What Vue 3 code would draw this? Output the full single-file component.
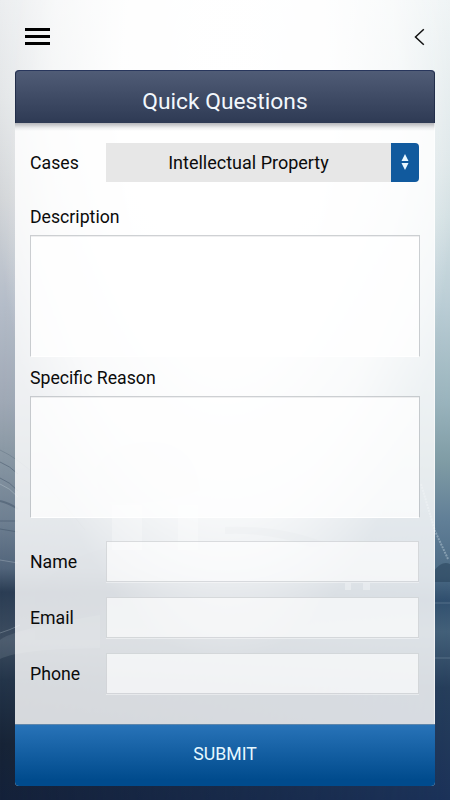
<script setup>
    import { ref } from 'vue';

    const description = ref('');
    const reason = ref('');
    const contact = ref({ name: '', email: '', phone: '' });
    const fields = [
        { key: 'name', label: 'Name', type: 'text' },
        { key: 'email', label: 'Email', type: 'email' },
        { key: 'phone', label: 'Phone', type: 'tel' }
    ];
</script>

<template>
    <div class="page">
        <svg class="backdrop" viewBox="0 0 450 800" preserveAspectRatio="none" aria-hidden="true">
            <defs>
                <linearGradient id="left" x1="0" y1="0" x2="0" y2="1">
                    <stop offset="0" stop-color="#ebedef" />
                    <stop offset=".12" stop-color="#e1e4e6" />
                    <stop offset=".25" stop-color="#d0d3d6" />
                    <stop offset=".38" stop-color="#b5bdc9" />
                    <stop offset=".5" stop-color="#a0a9b6" />
                    <stop offset=".56" stop-color="#8c9aa6" />
                    <stop offset=".65" stop-color="#6f8092" />
                    <stop offset=".71" stop-color="#52657b" />
                    <stop offset=".74" stop-color="#2b3d54" />
                    <stop offset=".8" stop-color="#3d4d60" />
                    <stop offset=".85" stop-color="#24354a" />
                    <stop offset=".93" stop-color="#172437" />
                    <stop offset="1" stop-color="#14213a" />
                </linearGradient>
                <linearGradient id="right" x1="0" y1="0" x2="0" y2="1">
                    <stop offset="0" stop-color="#eff4f5" />
                    <stop offset=".2" stop-color="#dee7e9" />
                    <stop offset=".27" stop-color="#d3e0e3" />
                    <stop offset=".38" stop-color="#bacdd5" />
                    <stop offset=".5" stop-color="#9ab4bd" />
                    <stop offset=".58" stop-color="#7e9ba4" />
                    <stop offset=".65" stop-color="#617f97" />
                    <stop offset=".72" stop-color="#4b6a84" />
                    <stop offset=".75" stop-color="#31506f" />
                    <stop offset=".79" stop-color="#436079" />
                    <stop offset=".86" stop-color="#263e5b" />
                    <stop offset="1" stop-color="#1b3259" />
                </linearGradient>
                <linearGradient id="across" x1="0" y1="0" x2="1" y2="0">
                    <stop offset="0" stop-color="#000" />
                    <stop offset="1" stop-color="#fff" />
                </linearGradient>
                <mask id="fade"><rect width="450" height="800" fill="url(#across)" /></mask>
                <radialGradient id="glow" gradientUnits="userSpaceOnUse" cx="0" cy="0" r="1" gradientTransform="translate(225 110) scale(232 550)">
                    <stop offset="0" stop-color="#fff" />
                    <stop offset=".45" stop-color="#fff" stop-opacity=".95" />
                    <stop offset=".75" stop-color="#fff" stop-opacity=".65" />
                    <stop offset="1" stop-color="#fff" stop-opacity="0" />
                </radialGradient>
            </defs>
            <rect width="450" height="800" fill="url(#left)" />
            <rect width="450" height="800" fill="url(#right)" mask="url(#fade)" />
            <rect width="450" height="800" fill="url(#glow)" />
            <!-- pages of the open book -->
            <g fill="none" stroke="#34475c" stroke-opacity=".4">
                <path d="M0 450Q35 466 85 530" stroke-opacity=".2" />
                <path d="M0 462Q10 466 18 474" />
                <path d="M0 478Q10 482 18 491" />
                <path d="M0 484Q10 488 18 497" stroke="#c1ccd4" />
                <path d="M0 501Q9 503 18 509" stroke-width="2" />
                <path d="M0 521H18M0 529L18 532" />
                <path d="M0 560L18 563" stroke="#aebcc6" />
            </g>
            <path d="M0 640Q10 630 100 615V648Q20 649 0 659Z" fill="#8796a3" fill-opacity=".22" />
            <path d="M0 633Q10 630 20 625" stroke="#8d9ba7" stroke-opacity=".5" fill="none" />
            <!-- gavel -->
            <path d="M95 470Q110 440 155 442Q195 443 200 490Q150 510 100 500Z" fill="#7c8795" fill-opacity=".12" />
            <path d="M112 505H142V550H112ZM178 505H198V550H178Z" fill="#fff" fill-opacity=".25" />
            <path d="M225 527Q285 525 330 545L310 547Q270 532 225 534Z" fill="#3d5165" fill-opacity=".15" />
            <path d="M35 590Q70 555 107 548V640H35Z" fill="#26384a" fill-opacity=".08" />
            <!-- scales -->
            <path d="M421 484L435 531L448 559" fill="none" stroke="#a9bdca" stroke-opacity=".6" stroke-width="2" stroke-dasharray="2 1" />
            <path d="M434 571Q442 560 450 564V582H434Z" fill="#243d56" fill-opacity=".5" />
            <path d="M345 583H351V590H345ZM363 583H370V590H363Z" fill="#fff" fill-opacity=".3" />
            <path d="M435 603H450M435 658H450" stroke="#8199aa" stroke-opacity=".45" />
        </svg>

        <header class="topbar">
            <button class="icon" aria-label="Menu">
                <svg width="25" height="18" viewBox="0 0 25 18"><path d="M0 1.5H25M0 8.5H25M0 15.5H25" stroke="#000" stroke-width="2.8" /></svg>
            </button>
            <button class="icon" aria-label="Back">
                <svg width="11" height="18" viewBox="0 0 11 18"><path d="M9.8 1.2L1.5 9L9.8 16.8" fill="none" stroke="#111" stroke-width="1.5" /></svg>
            </button>
        </header>

        <form class="card" @submit.prevent>
            <h1>Quick Questions</h1>
            <div class="body">
                <div class="row cases">
                    <span class="label">Cases</span>
                    <div class="select">
                        <span class="value">Intellectual Property</span>
                        <span class="arrows">
                            <svg width="8" height="16" viewBox="0 0 8 16"><path d="M4 0L7.5 7H.5ZM.5 9H7.5L4 16Z" fill="#e9f7ff" /></svg>
                        </span>
                    </div>
                </div>
                <label class="block first">
                    <span>Description</span>
                    <textarea v-model="description"></textarea>
                </label>
                <label class="block">
                    <span>Specific Reason</span>
                    <textarea v-model="reason"></textarea>
                </label>
                <div class="contact">
                    <label class="row" v-for="field in fields" :key="field.key">
                        <span class="label">{{ field.label }}</span>
                        <input :type="field.type" v-model="contact[field.key]">
                    </label>
                </div>
            </div>
            <button class="submit">SUBMIT</button>
        </form>
    </div>
</template>

<style>
    body{
        margin: 0;
    }
</style>

<style scoped>
    *{
        box-sizing: border-box;
    }
    .page{
        position: relative;
        z-index: 0;
        width: 450px;
        height: 800px;
        overflow: hidden;
        font-family: Roboto, "Liberation Sans", sans-serif;
        font-size: 17.7px;
        color: #0b0b0b;
    }
    .backdrop{
        position: absolute;
        inset: 0;
        width: 100%;
        height: 100%;
        z-index: -1;
    }
    .topbar{
        display: flex;
        justify-content: space-between;
        align-items: center;
        height: 70px;
        padding: 4px 25px 0;
    }
    .icon{
        display: flex;
        padding: 0;
        border: none;
        background: none;
    }
    .card{
        width: 420px;
        margin: 0 auto;
    }
    h1{
        height: 53px;
        margin: 0;
        padding-top: 9px;
        border-top: 1px solid #28365c;
        border-radius: 4px 4px 0 0;
        background-image: linear-gradient(#505c76, #2e3a54);
        box-shadow: inset 1px 0 #222e4a, inset -1px 0 #222e4a;
        color: #f3f8fd;
        font-size: 22.8px;
        font-weight: 400;
        line-height: 44px;
        text-align: center;
    }
    .body{
        height: 601px;
        padding: 19px 15px 0;
        border-right: 1px solid rgba(255, 255, 255, 0.5);
        background-image: linear-gradient(#b5b6ba, rgba(235, 236, 238, 0.8) 5px, rgba(255, 255, 255, 0.82) 8px);
    }
    .row{
        display: flex;
        align-items: center;
    }
    .cases{
        height: 40px;
    }
    .label{
        width: 76px;
    }
    .cases .label{
        line-height: 40px;
        padding-top: 1px;
    }
    .select{
        display: flex;
        flex: 1;
        height: 39px;
    }
    .value{
        flex: 1;
        background-color: #e7e7e7;
        font-size: 18px;
        line-height: 40px;
        text-align: center;
    }
    .arrows{
        display: flex;
        align-items: center;
        justify-content: center;
        width: 28px;
        border-radius: 0 4px 4px 0;
        background-color: #115a9e;
    }
    .block{
        display: block;
        height: 161px;
    }
    .block.first{
        margin-top: 15px;
    }
    .block span{
        display: block;
        height: 38px;
        line-height: 40px;
    }
    textarea, input{
        display: block;
        margin: 0;
        outline: none;
        resize: none;
        border: 1px solid rgba(160, 165, 170, 0.5);
        background-color: rgba(255, 255, 255, 0.65);
        border-radius: 0;
        font: inherit;
    }
    textarea{
        width: 390px;
        height: 122px;
        border-bottom-color: #fff;
        background-color: rgba(255, 255, 255, 0.75);
        background-clip: padding-box;
        box-shadow: inset 0 1px rgba(190, 192, 194, 0.25);
    }
    .contact{
        display: flex;
        flex-direction: column;
        gap: 15px;
        margin-top: 22px;
    }
    input{
        flex: 1;
        min-width: 0;
        height: 41px;
        border-color: rgba(155, 160, 165, 0.35);
        box-shadow: 0 1px rgba(255, 255, 255, 0.4);
    }
    .submit{
        display: block;
        width: 100%;
        height: 62px;
        padding: 0 0 3px;
        border: none;
        border-top: 1px solid #5e86ab;
        border-radius: 0 0 4px 4px;
        background-image: linear-gradient(#2873b8, #004b8d 90%);
        color: #e6f8ff;
        font: inherit;
        line-height: 58px;
    }
</style>
